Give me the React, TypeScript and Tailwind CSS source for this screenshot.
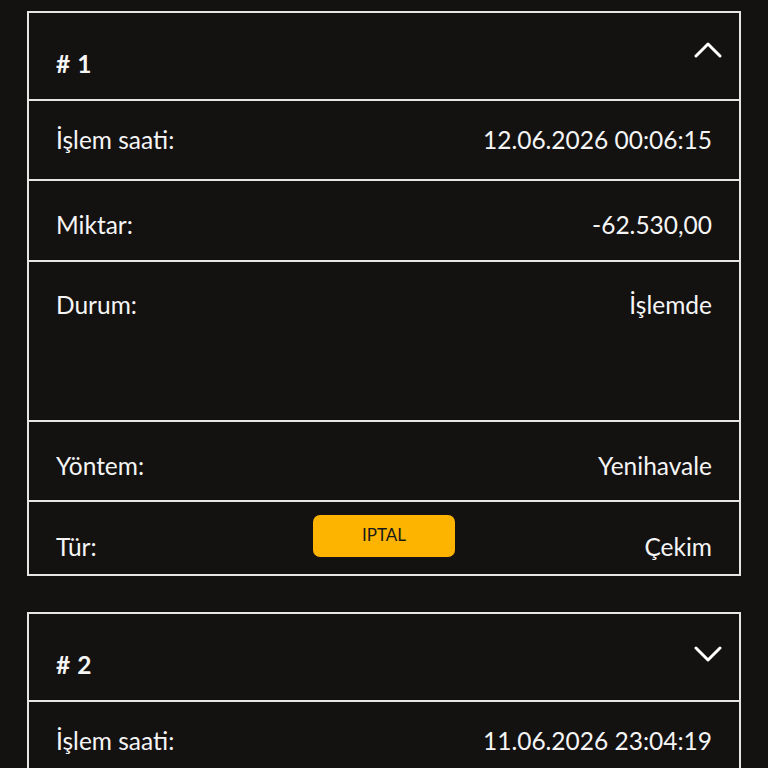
const rows1 = [
  { label: "İşlem saati:", value: "12.06.2026 00:06:15", cls: "pt-[25px] pb-[25px]" },
  { label: "Miktar:", value: "-62.530,00", cls: "pt-[30px] pb-[21px]" },
  { label: "Durum:", value: "İşlemde", cls: "pt-[29px] pb-[101px]" },
  { label: "Yöntem:", value: "Yenihavale", cls: "pt-[30px] pb-[20px]" },
];

function Chevron({ up }: { up: boolean }) {
  return (
    <svg width="28" height="18" viewBox="0 0 28 18" className="block">
      <polyline
        points={up ? "2,15 14,3 26,15" : "2,3 14,15 26,3"}
        fill="none"
        stroke="#ffffff"
        strokeWidth="3"
        strokeLinecap="round"
        strokeLinejoin="round"
      />
    </svg>
  );
}

function Header({ num, up }: { num: number; up: boolean }) {
  return (
    <div className="relative flex items-center pt-[37px] pb-[21px] px-[27px]">
      <span className="text-[24.5px] leading-[28px] font-bold tracking-[0.5px]">#&nbsp;{num}</span>
      <div className={up ? "absolute right-[17px] top-[28px]" : "absolute right-[17px] top-[31px]"}>
        <Chevron up={up} />
      </div>
    </div>
  );
}

function Row({ label, value, cls }: { label: string; value: string; cls: string }) {
  return (
    <div className={"flex items-start justify-between border-t-2 border-[#e6e6e6] px-[27px] " + cls}>
      <span className="text-[24.5px] leading-[28px]">{label}</span>
      <span className="text-[24.5px] leading-[28px]">{value}</span>
    </div>
  );
}

export default function App() {
  return (
    <div
      className="min-h-[768px] w-[768px] overflow-hidden bg-[#141111] text-[#f5f5f5] pt-[11px]"
      style={{ fontFamily: "Lato, 'Noto Sans', sans-serif" }}
    >
      <div className="mx-[27px] border-2 border-[#e6e6e6]">
        <Header num={1} up={true} />
        {rows1.map((r) => (
          <Row key={r.label} {...r} />
        ))}
        <div className="grid grid-cols-3 border-t-2 border-[#e6e6e6] px-[27px] h-[74px]">
          <span className="self-end pb-[13px] text-[24.5px] leading-[28px]">Tür:</span>
          <div className="flex justify-center pt-[13px]">
            <button className="w-[142px] h-[42px] rounded-[7px] bg-[#fcb400] text-[#1a1a1a] text-[17px] leading-[20px] pb-[2px]">
              IPTAL
            </button>
          </div>
          <span className="self-end pb-[13px] text-right text-[24.5px] leading-[28px]">Çekim</span>
        </div>
      </div>

      <div className="mx-[27px] mt-[36px] border-2 border-[#e6e6e6]">
        <Header num={2} up={false} />
        <Row label="İşlem saati:" value="11.06.2026 23:04:19" cls="pt-[25px] pb-[25px]" />
      </div>
    </div>
  );
}
